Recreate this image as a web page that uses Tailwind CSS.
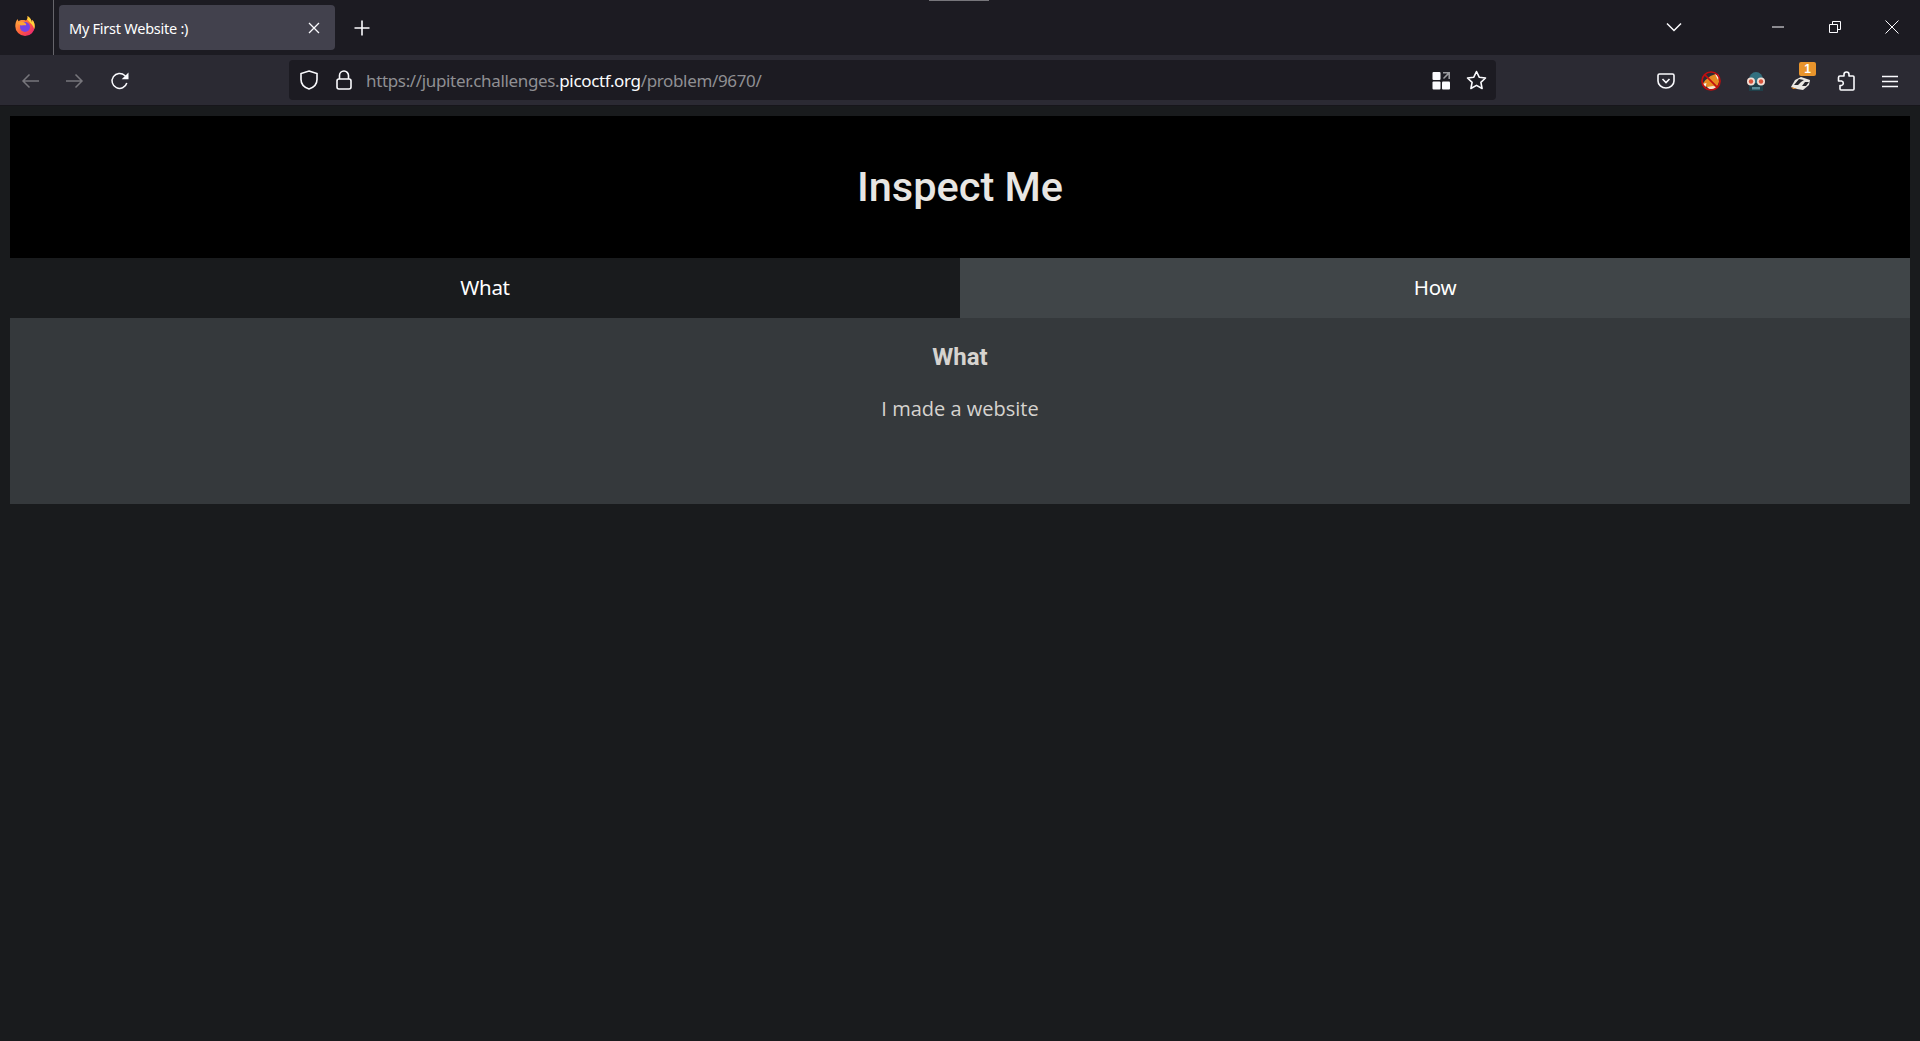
<!DOCTYPE html>
<html lang="en">
<head>
    <meta charset="UTF-8">
    <title>My First Website :)</title>
    <script src="https://cdn.jsdelivr.net/npm/@tailwindcss/browser@4"></script>
</head>
<body class="bg-[#191b1d] h-[1041px] overflow-hidden font-['Open_Sans',sans-serif]">

    <!-- tab strip -->
    <div class="relative h-[55px] bg-[#1c1b22] flex items-start">
        <div class="absolute left-[929px] top-0 w-[60px] h-px bg-[#77767b]"></div>
        <div class="w-[53px] h-[55px] flex items-center justify-center border-r border-[#66656b] box-content">
            <svg width="22" height="22" viewBox="0 0 22 22" class="-translate-y-[2px] -translate-x-[2px]">
                <defs>
                    <linearGradient id="fx" x1="0" y1="0" x2="1" y2="1">
                        <stop offset="0" stop-color="#ffbd3f"/>
                        <stop offset="0.55" stop-color="#ff5a3c"/>
                        <stop offset="1" stop-color="#e31587"/>
                    </linearGradient>
                </defs>
                <path d="M11 21a9.600 9.600 0 0 0 9.700-9.800c0-2.600-1-4.700-2.500-6.400.2 1.200 0 2-.4 2.400C17.400 4.600 15.600 2.500 13.500 1c.5 2.200-.4 3.600-1.500 4.500C9 4.700 6 5 4.500 6.200 4 5.500 3.700 4.700 3.700 4 2 6 1.300 8.500 1.300 11.200A9.700 9.700 0 0 0 11 21z" fill="url(#fx)"/>
                <circle cx="11" cy="12" r="5" fill="#7542e5"/>
                <path d="M3.500 8.500c2-1.800 5-2.200 7-1 1.500.8 2 2 1.500 2.800l-3.500 0C7.500 11 6 10 3.500 8.500z" fill="#ffa436"/>
                <path d="M13.500 1c2.500 1.500 4 3.500 4.300 6.200.4-.4.6-1.200.4-2.400 1.500 1.700 2.500 3.800 2.500 6.400 0 1-.2 2-.5 2.800-1-4-3.500-5.500-5.200-7.500-.8-1-1.600-2-2.500-1 1-.9 1.500-2.300 1-4.500z" fill="#ffd43a"/>
            </svg>
        </div>
        <div class="ml-[5px] mt-[5px] w-[276px] h-[45px] bg-[#42414d] rounded-[4px] flex items-center pl-[10px] pr-[15px] text-[white] text-[14.5px] tracking-[-0.25px] font-['Noto_Sans',sans-serif]">
            <span class="flex-1 translate-y-[0.5px]">My First Website :)</span>
            <svg width="12" height="12" viewBox="0 0 12 12" fill="none" stroke="#fbfbfe" stroke-width="1.300"><path d="M1 1l10 10M11 1L1 11"/></svg>
        </div>
        <div class="ml-[19px] mt-[5px] h-[45px] flex items-center">
            <svg width="16" height="16" viewBox="0 0 16 16" fill="none" stroke="#fbfbfe" stroke-width="1.600"><path d="M8 0.500v15M0.500 8h15"/></svg>
        </div>
        <div class="ml-auto flex items-center h-[53px]">
            <svg width="16" height="10" viewBox="0 0 16 10" fill="none" stroke="#fbfbfe" stroke-width="1.500" class="mr-[90px]"><path d="M1 1.500l7 7 7-7"/></svg>
            <svg width="12" height="2" viewBox="0 0 12 2" class="mr-[45px]"><path d="M0 1h12" stroke="#fbfbfe" stroke-width="1"/></svg>
            <svg width="12" height="12" viewBox="0 0 12 12" fill="none" stroke="#fbfbfe" class="mr-[44px]"><path d="M.500 3.500h8v8h-8zM3.500 3.500v-3h8v8h-3"/></svg>
            <svg width="14" height="14" viewBox="0 0 14 14" fill="none" stroke="#fbfbfe" stroke-width="1" class="mr-[21px]"><path d="M.500.500l13 13M13.500.500l-13 13"/></svg>
        </div>
    </div>

    <!-- toolbar -->
    <div class="h-[50px] bg-[#2b2a33] flex items-center pl-[21px] border-b border-[#17161b] box-content">
        <svg width="18" height="16" viewBox="0 0 18 16" fill="none" stroke="#77767c" stroke-width="1.500" class="translate-y-[1px]"><path d="M18 8H2M8.500 1.500L2 8l6.500 6.500"/></svg>
        <svg width="18" height="16" viewBox="0 0 18 16" fill="none" stroke="#77767c" stroke-width="1.500" class="ml-[27px] translate-y-[1px]"><path d="M0 8h16M9.500 1.500L16 8l-6.500 6.500"/></svg>
        <svg width="20" height="20" viewBox="0 0 20 20" fill="none" class="ml-[26px] translate-y-[1px]">
            <path d="M16.800 12a7.500 7.500 0 1 1-2-7.500L17 6.500" stroke="#fbfbfe" stroke-width="1.500"/>
            <path d="M18.500 1.500v6.800h-6.800z" fill="#fbfbfe"/>
        </svg>

        <div class="ml-[159px] w-[1207px] h-[40px] bg-[#1c1b22] rounded-[4px] flex items-center pl-[11px] pr-[9px]">
            <svg width="18" height="20" viewBox="0 0 18 20" fill="none" stroke="#fbfbfe" stroke-width="1.600"><path d="M9 1l8 2.500v6C17 14 13.500 17.500 9 19 4.500 17.500 1 14 1 9.500v-6z"/></svg>
            <svg width="16" height="20" viewBox="0 0 16 20" fill="none" stroke="#fbfbfe" stroke-width="1.600" class="ml-[18px]"><rect x="1" y="9" width="14" height="10" rx="2"/><path d="M3.500 9V5.500a4.500 4.500 0 0 1 9 0V9"/></svg>
            <div class="ml-[14px] text-[17px] tracking-[-0.35px] text-[#8f8f93] font-['Noto_Sans',sans-serif] flex-1 translate-y-[1px]">https://jupiter.challenges.<span class="text-[#fbfbfe]">picoctf.org</span>/problem/9670/</div>
            <svg width="19" height="19" viewBox="0 0 19 19" fill="#fbfbfe" class="translate-x-[1px]">
                <rect x="0.500" y="1" width="8" height="8" rx="1"/>
                <rect x="0.500" y="10.500" width="8" height="8" rx="1"/>
                <rect x="10" y="10.500" width="8" height="8" rx="1"/>
                <path d="M11 1h7v7h-1.600V3.700L12 8l-1-1 4.300-4.400H11z" fill="#9a9a9e"/>
            </svg>
            <svg width="21" height="20" viewBox="0 0 21 20" fill="none" stroke="#fbfbfe" stroke-width="1.600" class="ml-[16px]"><path d="M10.500 1.500l2.700 5.700 6.300.8-4.600 4.300 1.200 6.200-5.600-3.100-5.600 3.100 1.200-6.200L1.500 8l6.300-.8z" stroke-linejoin="round"/></svg>
        </div>

        <div class="ml-auto flex items-center relative h-full translate-y-[1px]">
            <svg width="18" height="16" viewBox="0 0 18 16" fill="none" stroke="#fbfbfe" stroke-width="1.600"><path d="M2.500 1h13A1.500 1.500 0 0 1 17 2.500V8a8 7 0 0 1-16 0V2.500A1.500 1.500 0 0 1 2.500 1z"/><path d="M5.500 6l3.500 3.500L12.500 6"/></svg>
            <!-- extension: fox with no sign -->
            <svg width="20" height="20" viewBox="0 0 20 20" class="ml-[26px]">
                <path d="M1.500 13l3-4 5-4 5-2 1 2 2 1 .5 5-2 5H6z" fill="#e78a22"/>
                <path d="M1.500 13l4-1-1 4z" fill="#f7f3ec"/>
                <path d="M14 3l4 1-1 5z" fill="#f7f3ec"/>
                <path d="M6 16l6-1 4 1-3 2H8z" fill="#f4e3cd"/>
                <circle cx="10" cy="10" r="9" fill="none" stroke="#c20e10" stroke-width="1.700"/>
                <path d="M3.700 3.700l12.600 12.600" stroke="#c20e10" stroke-width="1.700"/>
            </svg>
            <!-- extension: glasses character -->
            <svg width="20" height="20" viewBox="0 0 20 20" class="ml-[25px]">
                <path d="M3 9a7 8 0 0 1 14 0v4H3z" fill="#33707f"/>
                <path d="M3 12h14v8H3z" fill="#1f3f49"/>
                <rect x="6" y="16" width="8" height="2.500" fill="#5c8d99"/>
                <circle cx="5" cy="10.500" r="4" fill="#f2ded4"/>
                <circle cx="15" cy="10.500" r="4" fill="#f2ded4"/>
                <circle cx="5" cy="10.500" r="2.200" fill="#d9533b"/>
                <circle cx="15" cy="10.500" r="2.200" fill="#d9533b"/>
            </svg>
            <!-- extension: badger with count badge -->
            <div class="relative ml-[26px] w-[20px] h-[20px]">
                <svg width="22" height="20" viewBox="0 0 22 20" class="absolute -left-[1px] top-[1px]">
                    <path d="M0 15l4-7 6-3 9 3-1 5-6 5-6-1z" fill="#e9e6e1"/>
                    <path d="M3 13l5-6 5 1-3 2-3 3z" fill="#26252a"/>
                    <path d="M11 14l3-4 4 0-3 4z" fill="#26252a"/>
                    <path d="M0 15l3 1 3 1-4 0z" fill="#e78a22"/>
                </svg>
                <div class="absolute left-[7px] -top-[9px] w-[17px] h-[14px] bg-[#e8942c] rounded-[2px] text-white text-[12px] leading-[14px] font-bold text-center font-['Liberation_Sans',sans-serif]">1</div>
            </div>
            <svg width="18" height="20" viewBox="0 0 18 20" fill="none" stroke="#fbfbfe" stroke-width="1.600" class="ml-[25px]"><path d="M7 5V3.500a2.500 2.500 0 0 1 5 0V5h4a1 1 0 0 1 1 1v12a1 1 0 0 1-1 1H4a1 1 0 0 1-1-1v-3.500h1.500a2.300 2.300 0 0 0 0-4.500H1.500V6.500C1.500 5.700 2 5 3 5z" stroke-linejoin="round"/></svg>
            <svg width="16" height="13" viewBox="0 0 16 13" stroke="#fbfbfe" stroke-width="1.500" class="ml-[27px] mr-[22px]"><path d="M0 1.500h16M0 6.500h16M0 11.500h16"/></svg>
        </div>
    </div>

    <!-- page -->
    <div class="mx-[10px] mt-[10px]">
        <div class="h-[142px] bg-black flex items-center justify-center text-[#e8e6e3]">
            <h1 class="font-['Roboto',sans-serif] text-[41.5px] font-medium leading-none">Inspect Me</h1>
        </div>
        <div class="flex h-[60px] text-[20.5px] font-['Noto_Sans',sans-serif] tracking-[-0.3px]">
            <div class="flex-1 bg-[#191b1d] text-[#ffffff] flex items-center justify-center pb-[2px]">What</div>
            <div class="flex-1 bg-[#404548] text-[#ffffff] flex items-center justify-center pb-[2px]">How</div>
        </div>
        <div class="h-[186px] bg-[#35393c] text-center text-[#d6d3cf]">
            <h3 class="pt-[24px] text-[24px] font-bold leading-[30px] font-['Roboto',sans-serif]">What</h3>
            <p class="mt-[23px] text-[20px] leading-[27px] font-['Open_Sans',sans-serif]">I made a website</p>
        </div>
    </div>

</body>
</html>
